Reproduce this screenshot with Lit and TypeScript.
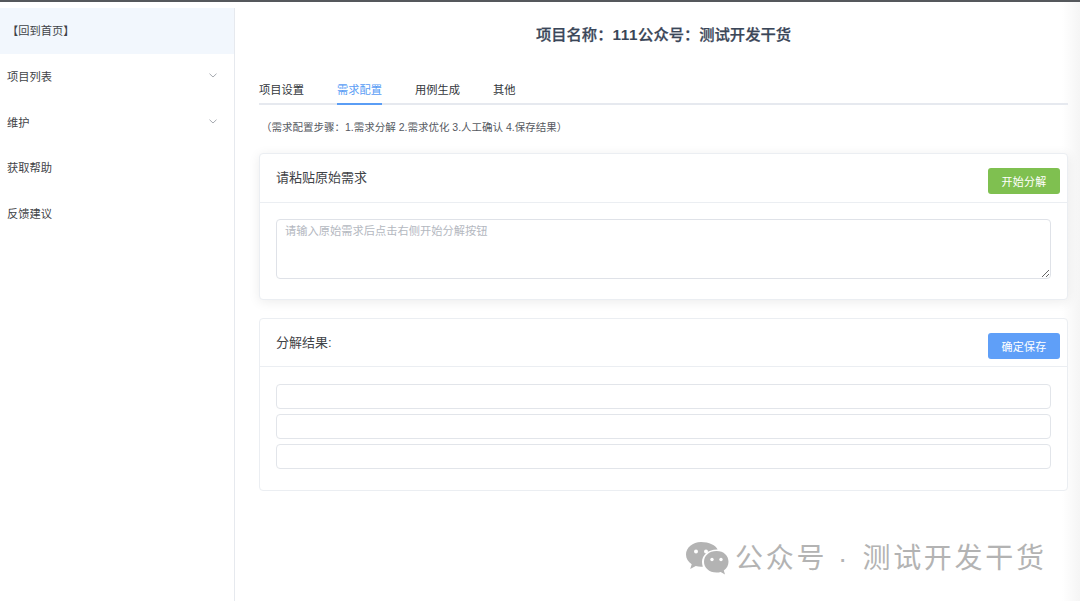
import { LitElement, html, css } from "lit";
import { customElement } from "lit/decorators.js";

const chevron = html`<svg class="chev" width="8" height="5" viewBox="0 0 8 5"><path d="M.5 .7L4 4l3.500-3.300" fill="none" stroke="#8f949c" stroke-width="0.8"/></svg>`;

@customElement("app-root")
export class AppRoot extends LitElement {
  static styles = css`
    :host { display: block; width: 1080px; height: 601px; position: relative; overflow: hidden;
      background: linear-gradient(to right, #fff 1062px, #f5f5f5 1080px);
      font-family: "Liberation Sans", "Noto Sans CJK SC", sans-serif; color: #303133; }
    .topline { height: 2px; background: #55585c; }
    .layout { display: flex; height: 599px; }
    .side { width: 234px; margin-top: 6px; border-right: 1px solid #e6e9ee; flex: none; font-size: 11.25px; color: #3f4347; }
    .item { height: 45.75px; display: flex; align-items: center; justify-content: space-between; padding: 0 17px 2px 7px; box-sizing: border-box; }
    .item.home { background: #f2f7fd; height: 46px; }
    .main { flex: 1; padding: 0 12px 0 24px; min-width: 0; }
    h1 { margin: 0; height: 65px; padding-top: 21px; box-sizing: border-box; font-size: 15.3px; line-height: 24px; font-weight: 500; color: #3a4658; text-align: center; -webkit-text-stroke: 0.25px #3a4658; }
    h1 .n { font-weight: 700; letter-spacing: .6px; -webkit-text-stroke: 0; }
    .tabs { display: flex; gap: 33px; height: 38px; border-bottom: 2px solid #e6e9ef; font-size: 11.25px; color: #33373c; box-sizing: border-box; padding-top: 13px; }
    .tab { height: 25px; line-height: 20px; box-sizing: border-box; }
    .tab.on { color: #5a9df5; border-bottom: 2px solid #5a9df5; }
    .steps { font-size: 10.5px; line-height: 16px; color: #55595f; margin: 14px 0 18px 2px; }
    .card { border: 1px solid #ebeef2; border-radius: 4px; background: #fff; }
    .card.shadow { box-shadow: 0 2px 12px rgba(0,0,0,.08); margin-bottom: 18px; }
    .head { display: flex; align-items: center; justify-content: space-between; padding: 0 7px 0 16px; border-bottom: 1px solid #ebeef2; font-size: 13px; color: #3f4347; box-sizing: border-box; }
    .head.a { height: 49px; }
    .head.b { height: 48px; }
    .head span { position: relative; top: -1px; }
    .head.a span { top: -2px; }
    .btn { width: 72px; height: 26px; border-radius: 3px; color: #fff; font-size: 11px; display: flex; align-items: center; justify-content: center; position: relative; top: 3px; letter-spacing: .3px; }
    .btn.green { background: #7fc050; }
    .btn.blue { background: #5f9ff8; }
    .body { padding: 16px 16px 20px 16px; }
    textarea { display: block; width: 100%; height: 60px; box-sizing: border-box; border: 1px solid #dfe2e8; border-radius: 4px; padding: 2px 8px; font: 11.25px/18px "Liberation Sans", "Noto Sans CJK SC", sans-serif; color: #606266; outline: none; margin: 0; }
    textarea::placeholder { color: #b4b8bf; }
    .rows { display: flex; flex-direction: column; gap: 5px; }
    .input { height: 25px; box-sizing: border-box; border: 1px solid #e2e5ea; border-radius: 4px; }
    .body.b { padding: 17px 16px 21px 16px; }
    .wm { position: absolute; left: 685px; top: 536px; display: flex; align-items: center; color: #b3b3b3; font-size: 28px; line-height: 40px; letter-spacing: 2.7px; white-space: nowrap; }
    .wm svg { margin-right: 6px; }
    .wm span { padding-top: 3px; }
    .wm .dot { margin: 0 15px 0 11px; letter-spacing: 0; }
  `;
  render() {
    return html`
      <div class="topline"></div>
      <div class="layout">
        <nav class="side">
          <div class="item home">【回到首页】</div>
          <div class="item">项目列表${chevron}</div>
          <div class="item">维护${chevron}</div>
          <div class="item">获取帮助</div>
          <div class="item">反馈建议</div>
        </nav>
        <main class="main">
          <h1>项目名称：<span class="n">111</span>公众号：测试开发干货</h1>
          <div class="tabs">
            <div class="tab">项目设置</div>
            <div class="tab on">需求配置</div>
            <div class="tab">用例生成</div>
            <div class="tab">其他</div>
          </div>
          <div class="steps">（需求配置步骤：1.需求分解 2.需求优化 3.人工确认 4.保存结果）</div>
          <section class="card shadow">
            <div class="head a"><span>请粘贴原始需求</span><div class="btn green">开始分解</div></div>
            <div class="body"><textarea placeholder="请输入原始需求后点击右侧开始分解按钮"></textarea></div>
          </section>
          <section class="card">
            <div class="head b"><span>分解结果:</span><div class="btn blue">确定保存</div></div>
            <div class="body b">
              <div class="rows">
                <div class="input"></div><div class="input"></div><div class="input"></div>
              </div>
            </div>
          </section>
        </main>
      </div>
      <div class="wm">
        <svg width="44" height="36" viewBox="0 0 44 36">
          <path fill="#b3b3b3" d="M16 2C7.7 2 1 7.6 1 14.500c0 4 2.200 7.400 5.700 9.700L5.200 29l5.600-3c1.600.5 3.400.8 5.200.8.600 0 1.200 0 1.800-.1C17.300 25 17 23.400 17 22c0-7.200 6.600-12.500 14.800-12.500.3 0 .5 0 .8 0C30.900 5.200 24 2 16 2z"/>
          <circle cx="11" cy="11.500" r="2" fill="#fff"/><circle cx="21" cy="11.500" r="2" fill="#fff"/>
          <path fill="#b3b3b3" d="M31.500 11C24 11 19 15.900 19 21.800s5 10.800 12.500 10.800c1.500 0 2.900-.2 4.200-.6l4.300 2.500-1.200-4.100c3-2 4.700-5 4.700-8.600C43.500 15.900 39 11 31.500 11z"/>
          <circle cx="27" cy="19.500" r="1.700" fill="#fff"/><circle cx="36" cy="19.500" r="1.700" fill="#fff"/>
        </svg>
        <span>公众号</span><span class="dot">·</span><span>测试开发干货</span>
      </div>
    `;
  }
}
